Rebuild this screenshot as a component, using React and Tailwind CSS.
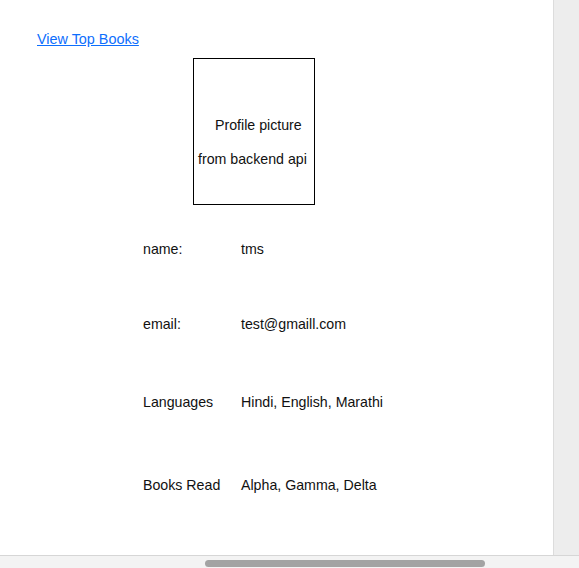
export default function App() {
  const rows = [
    { label: "name:", value: "tms", mt: "mt-[36px]" },
    { label: "email:", value: "test@gmaill.com", mt: "mt-[59px]" },
    { label: "Languages", value: "Hindi, English, Marathi", mt: "mt-[62px]" },
    { label: "Books Read", value: "Alpha, Gamma, Delta", mt: "mt-[67px]" },
  ];
  return (
    <div className="flex h-[568px] w-[579px] flex-col overflow-hidden bg-white text-[14.2px] leading-[16px] text-[#111] [font-family:'Liberation_Sans',Arial,sans-serif]">
      <div className="flex min-h-0 flex-1">
        <div className="flex-1 pl-[37px] pt-[31px]">
          <a href="#" className="block w-max text-[14.4px] text-[#0d6efd] underline">
            View Top Books
          </a>
          <div className="ml-[156px] mt-[11px] flex h-[147px] w-[122px] flex-col border border-black pt-[58px]">
            <p className="pl-[21px]">Profile picture</p>
            <p className="mt-[18px] pl-[4px]">from backend api</p>
          </div>
          <div className="ml-[106px]">
            {rows.map((r) => (
              <div key={r.label} className={`flex ${r.mt}`}>
                <span className="w-[98px]">{r.label}</span>
                <span>{r.value}</span>
              </div>
            ))}
          </div>
        </div>
        <div className="w-[26px] border-l border-[#dcdcdc] bg-[#ededed]" />
      </div>
      <div className="h-[13px] border-t border-[#d6d6d6] bg-[#f3f3f3] pt-[4px]">
        <div className="ml-[205px] h-[7px] w-[280px] rounded-full bg-[#a3a3a3]" />
      </div>
    </div>
  );
}
